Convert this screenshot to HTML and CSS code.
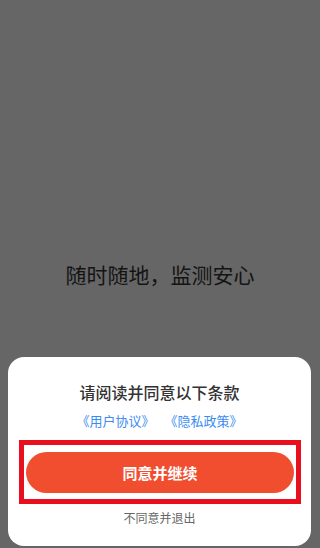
FILE: index.html
```html
<!DOCTYPE html>
<html lang="zh-CN">
<head>
  <meta charset="UTF-8" />
  <meta name="viewport" content="width=device-width, initial-scale=1.0" />
  <title>随时随地，监测安心</title>
  <link rel="stylesheet" href="styles.css">
</head>
<body>
  <main class="splash">
    <h1 class="slogan">随时随地，监测安心</h1>
  </main>

  <div class="sheet">
    <h2 class="sheet-title">请阅读并同意以下条款</h2>
    <div class="links">
      <a href="#" class="link">《用户协议》</a>
      <a href="#" class="link">《隐私政策》</a>
    </div>
    <div class="highlight">
      <button class="agree-btn">同意并继续</button>
    </div>
    <a href="#" class="exit-link">不同意并退出</a>
  </div>
</body>
</html>
```

FILE: styles.css
```css
html, body {
  margin: 0;
  padding: 0;
  height: 100%;
}

body {
  font-family: "Noto Sans CJK SC", "Noto Sans", sans-serif;
  background-color: #666666;
  position: relative;
  overflow: hidden;
}

.splash {
  height: 100%;
  display: flex;
  align-items: center;
  justify-content: center;
}

.slogan {
  margin: 0;
  font-size: 21px;
  font-weight: normal;
  color: #141414;
  line-height: 28px;
}

.sheet {
  position: absolute;
  left: 8px;
  right: 9px;
  bottom: 2px;
  background: #fff;
  border-radius: 16px;
  padding: 24px 0 20px;
  display: flex;
  flex-direction: column;
  align-items: center;
}

.sheet-title {
  margin: 0;
  font-size: 16px;
  line-height: 22px;
  font-weight: 500;
  color: #333;
}

.links {
  margin-top: 9px;
  display: flex;
  gap: 10px;
}

.link {
  font-size: 13px;
  line-height: 18px;
  color: #3b8cf0;
  text-decoration: none;
}

.highlight {
  margin: 10px 10px 0 11px;
  align-self: stretch;
  border: 5px solid #e8101e;
  padding: 7px 2px 6px;
}

.agree-btn {
  display: block;
  width: 100%;
  height: 41px;
  border: none;
  border-radius: 21px;
  background-color: #f04e2f;
  color: #fff;
  font-family: inherit;
  font-size: 15px;
  font-weight: bold;
}

.exit-link {
  margin-top: 6px;
  font-size: 12px;
  line-height: 16px;
  color: #666;
  text-decoration: none;
}
```
